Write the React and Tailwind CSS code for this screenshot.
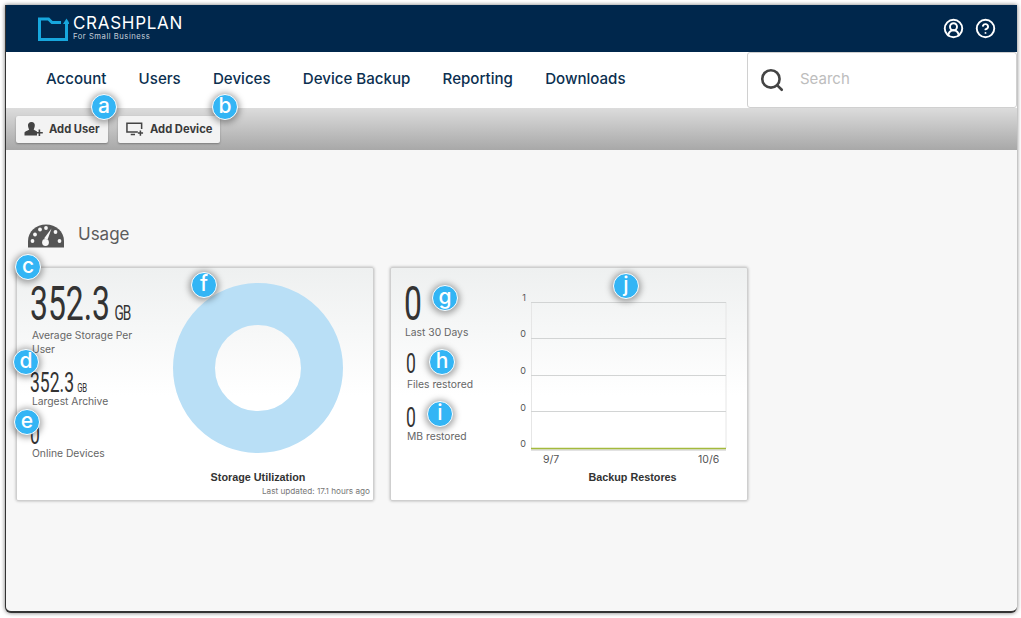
import React from 'react';
import { CircleHelp, CircleUserRound, Search } from 'lucide-react';

const navItems = ['Account', 'Users', 'Devices', 'Device Backup', 'Reporting', 'Downloads'];

const badges = [
    { letter: 'a', pos: 'left-[91px] top-[94px]' },
    { letter: 'b', pos: 'left-[212px] top-[94px]' },
    { letter: 'c', pos: 'left-[15px] top-[254px]' },
    { letter: 'd', pos: 'left-[13px] top-[349px]' },
    { letter: 'e', pos: 'left-[14px] top-[409px]' },
    { letter: 'f', pos: 'left-[191px] top-[272px]' },
    { letter: 'g', pos: 'left-[432px] top-[285px]' },
    { letter: 'h', pos: 'left-[429px] top-[349px]' },
    { letter: 'i', pos: 'left-[427px] top-[401px]' },
    { letter: 'j', pos: 'left-[613px] top-[273px]' },
];

const Badge = ({ letter, pos }) => (
    <div className={`absolute ${pos} flex h-[26px] w-[26px] items-center justify-center rounded-full border-[1.5px] border-white bg-[#33b5f5] pb-[3px] font-[Inter,sans-serif] text-[21px] leading-none font-medium text-white shadow-[0_1px_6px_2px_rgba(0,0,0,0.35)]`}>
        {letter}
    </div>
);

const LogoIcon = () => (
    <svg width="31" height="24" viewBox="0 0 31 24" fill="none">
        <path d="M28.5 7V22.5H1.5V2H10.5L14 5.5H23" stroke="#17a7dd" strokeWidth="3" />
        <path d="M28.5 1.5L32 7H25Z" fill="#17a7dd" />
    </svg>
);

const AddUserIcon = () => (
    <svg width="19" height="14" viewBox="0 0 19 14" fill="#444">
        <path d="M7.5 0C10 0 11 1.8 10.8 3.8C10.6 5.6 10 7 9.6 7.6C10.4 8.5 12 8.6 13 9.6V13.5H0.5V11C0.5 9.4 4 8.8 5.2 7.6C4.8 7 4.2 5.6 4 3.8C3.8 1.8 5 0 7.5 0Z" />
        <path d="M14.6 7.5H16.2V10H18.8V11.6H16.2V14H14.6V11.6H12V10H14.6Z" />
    </svg>
);

const AddDeviceIcon = () => (
    <svg width="18" height="14" viewBox="0 0 19 14" fill="none" stroke="#444" strokeWidth="1.6">
        <path d="M12.5 10.2H1V1H16.5V7" />
        <path d="M5 12.8H9.5" />
        <path d="M15.2 8.5V14M12.5 11.2H18" />
    </svg>
);

const GaugeIcon = () => (
    <svg width="36" height="24" viewBox="0 0 36 24">
        <path d="M0 23.5V17C0 7.5 8 0.5 18 0.5S36 7.5 36 17V23.5Z" fill="#555" />
        <g fill="#f7f7f7">
            <circle cx="4.5" cy="17" r="1.9" />
            <circle cx="7" cy="10.5" r="1.9" />
            <circle cx="12" cy="5.5" r="1.9" />
            <circle cx="18" cy="4" r="1.9" />
            <circle cx="27.5" cy="8" r="1.9" />
            <circle cx="31.5" cy="17" r="1.9" />
            <path d="M23.5 4.5L19.6 15.5L16 14.5Z" />
            <circle cx="17.5" cy="18.5" r="3.4" />
        </g>
    </svg>
);

const ToolbarButton = ({ icon, label, width }) => (
    <button className={`flex h-[27px] ${width} items-center rounded-[2px] bg-[#f3f3f3] pl-2 text-[11.2px] font-bold text-[#3a3a3a] shadow-[0_1px_2px_rgba(0,0,0,0.3)]`}>
        {icon}
        <span className="ml-[6px]">{label}</span>
    </button>
);

const Donut = () => (
    <svg width="170" height="170" viewBox="0 0 170 170">
        <circle cx="85" cy="85" r="64" fill="none" stroke="#b9dff6" strokeWidth="42" />
    </svg>
);

const RestoresChart = () => (
    <svg width="218" height="178" viewBox="0 0 218 178" className="font-[Inter,sans-serif]">
        <path d="M16.5 12V158M211 12V158" stroke="#e6e6e6" strokeWidth="1" />
        <g stroke="#d2d4d4" strokeWidth="1">
            <path d="M16 12.5H211" />
            <path d="M16 48.5H211" />
            <path d="M16 85.5H211" />
            <path d="M16 121.5H211" />
        </g>
        <path d="M16 160H211" stroke="#e2e2e2" strokeWidth="2" />
        <path d="M16 158.5H211" stroke="#a4ba3c" strokeWidth="1.5" />
        <g fill="#555" fontSize="9" textAnchor="end">
            <text x="11" y="11">1</text>
            <text x="11" y="47">0</text>
            <text x="11" y="84">0</text>
            <text x="11" y="121">0</text>
            <text x="11" y="157">0</text>
        </g>
        <g fill="#555" fontSize="10.5">
            <text x="28" y="173">9/7</text>
            <text x="183" y="173">10/6</text>
        </g>
    </svg>
);

const cardClass = 'relative h-[234px] w-[358px] rounded-[2px] border border-[#cfcfcf] bg-[linear-gradient(#eef0f0,#ffffff_55%)] shadow-[0_0_3px_rgba(0,0,0,0.3)]';
const bigNum = 'origin-left scale-x-[0.65] font-[Roboto,sans-serif] text-[#333]';
const labelText = 'text-[10.3px] text-[#666]';

export default function App() {
    return (
        <div className="h-[618px] w-[1021px] overflow-hidden bg-white pt-[5px] pl-[5px] font-[Inter,sans-serif]">
            <div className="flex h-[608px] w-[1012px] flex-col rounded-b-[6px] border-b-2 border-l border-[#333] bg-[#f7f7f7] shadow-[0_0_4px_rgba(0,0,0,0.55)]">
                <header className="flex h-[47px] items-center justify-between bg-[#00274c] pr-[21px] pl-[32px]">
                    <div className="flex items-center">
                        <LogoIcon />
                        <div className="ml-[4px] text-white">
                            <div className="text-[17px] leading-[17px] tracking-[0.7px]">CRASHPLAN</div>
                            <div className="text-[7.7px] leading-[10px] tracking-[0.5px] text-[#c5d0da]">For Small Business</div>
                        </div>
                    </div>
                    <div className="flex items-center gap-[11px] text-white">
                        <CircleUserRound size={21} strokeWidth={2.2} />
                        <CircleHelp size={21} strokeWidth={2.2} />
                    </div>
                </header>

                <nav className="flex h-[56px] items-center justify-between bg-white pl-[40px]">
                    <div className="flex gap-[32.2px] pb-[1px] text-[15.1px] font-medium text-[#0b2f50]">
                        {navItems.map(item => <span key={item}>{item}</span>)}
                    </div>
                    <div className="flex h-[56px] w-[270px] items-center rounded-[3px] border border-[#d0d0d0] bg-white pl-[11px]">
                        <Search size={26} strokeWidth={2.4} className="text-[#444]" />
                        <span className="ml-[15px] pb-[1px] text-[15px] text-[#bdbdbd]">Search</span>
                    </div>
                </nav>

                <div className="flex h-[42px] items-center gap-[10px] bg-[linear-gradient(#dcdcdc,#a8a8a8)] pl-[10px]">
                    <ToolbarButton icon={<AddUserIcon />} label="Add User" width="w-[92px]" />
                    <ToolbarButton icon={<AddDeviceIcon />} label="Add Device" width="w-[102px]" />
                </div>

                <main className="px-[10px] pt-[74px]">
                    <div className="mb-[20px] flex h-[23px] items-center pl-[12px]">
                        <GaugeIcon />
                        <span className="ml-[14px] pb-[1px] text-[17px] text-[#5c5c5c]">Usage</span>
                    </div>

                    <div className="flex gap-[16px]">
                        <section className={cardClass}>
                            <div className="flex">
                                <div className="w-[156px] pt-[12px] pl-[13px]">
                                    <div className={`${bigNum} flex h-[45px] items-baseline text-[49px] leading-[47px]`}>
                                        352.3<span className="ml-[7px] text-[21px] tracking-[-1.5px]">GB</span>
                                    </div>
                                    <p className={`${labelText} mt-[3px] ml-[2px] w-[108px] leading-[14px]`}>Average Storage Per User</p>
                                    <div className={`${bigNum} mt-[15px] flex h-[24px] items-baseline text-[27px] leading-[24px]`}>
                                        352.3<span className="ml-[5px] text-[12px] tracking-[-0.5px]">GB</span>
                                    </div>
                                    <p className={`${labelText} -mt-px ml-[2px] leading-[14px]`}>Largest Archive</p>
                                    <div className={`${bigNum} mt-[15px] h-[24px] text-[27px] leading-[24px]`}>0</div>
                                    <p className={`${labelText} -mt-px ml-[2px] leading-[14px]`}>Online Devices</p>
                                </div>
                                <div className="flex w-[170px] flex-col items-center pt-[15px]">
                                    <Donut />
                                    <div className="mt-[17px] font-['Liberation_Sans',sans-serif] text-[10.8px] leading-[14px] font-bold text-[#333]">Storage Utilization</div>
                                </div>
                            </div>
                            <div className="mt-[1px] pr-[3px] text-right text-[8.2px] leading-[12px] text-[#777]">Last updated: 17.1 hours ago</div>
                        </section>

                        <section className={`${cardClass} flex`}>
                            <div className="w-[124px] pt-[12px] pl-[13px]">
                                <div className={`${bigNum} h-[45px] text-[49px] leading-[47px]`}>0</div>
                                <p className={`${labelText} ml-[1px] leading-[14px]`}>Last 30 Days</p>
                                <div className={`${bigNum} mt-[13px] ml-[2px] h-[24px] text-[27px] leading-[24px]`}>0</div>
                                <p className={`${labelText} mt-[1px] ml-[3px] leading-[14px]`}>Files restored</p>
                                <div className={`${bigNum} mt-[15px] ml-[2px] h-[24px] text-[27px] leading-[24px]`}>0</div>
                                <p className={`${labelText} -mt-px ml-[3px] leading-[14px]`}>MB restored</p>
                            </div>
                            <div className="pt-[22px]">
                                <RestoresChart />
                                <div className="mt-[2px] ml-[20px] w-[195px] text-center font-['Liberation_Sans',sans-serif] text-[10.8px] leading-[14px] font-bold text-[#333]">Backup Restores</div>
                            </div>
                        </section>
                    </div>
                </main>
            </div>
            {badges.map(b => <Badge key={b.letter} {...b} />)}
        </div>
    );
}
